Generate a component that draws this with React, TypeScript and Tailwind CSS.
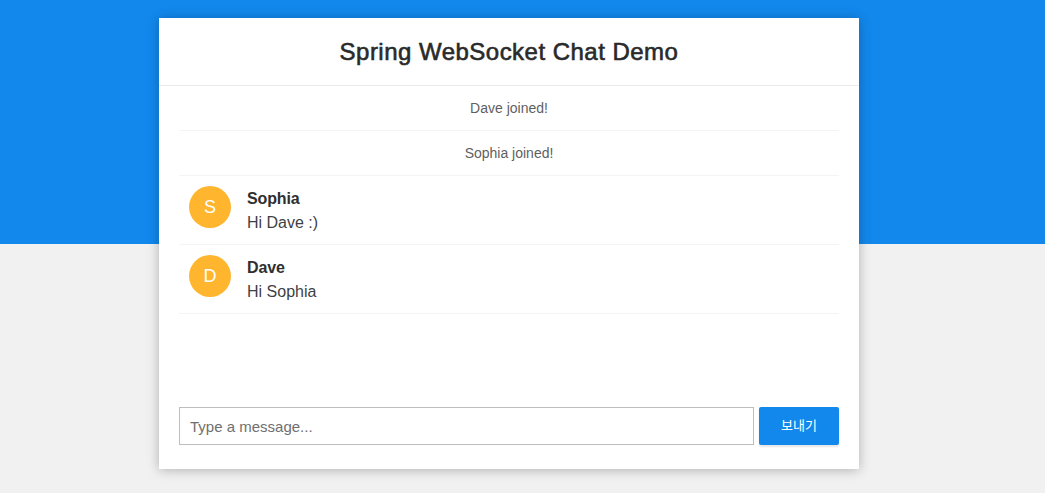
const messages = [
  { name: "Sophia", text: "Hi Dave :)" },
  { name: "Dave", text: "Hi Sophia" },
];

function EventRow({ children }: { children: React.ReactNode }) {
  return (
    <li className="h-[45px] border-b border-[#f4f4f4] pt-[13px] text-center text-[14px] leading-[18px] text-[#5f5f5f]">
      {children}
    </li>
  );
}

function ChatRow({ name, text }: { name: string; text: string }) {
  return (
    <li className="flex h-[69px] border-b border-[#f4f4f4] pl-[10px] pt-[10px]">
      <div className="flex h-[42px] w-[42px] items-center justify-center rounded-full bg-[#ffb52d] text-[18px] text-white">
        {name[0]}
      </div>
      <div className="ml-[16px] pt-[1px]">
        <div className="text-[16px] leading-[24px] font-bold tracking-[-0.15px] text-[#2f2f2f]">{name}</div>
        <p className="text-[16px] leading-[24px] text-[#3f3f44]">{text}</p>
      </div>
    </li>
  );
}

export default function App() {
  return (
    <div className="h-[493px] overflow-hidden bg-[linear-gradient(#1288ec_0,#1288ec_244px,#f1f1f1_244px)] pt-[18px] font-['Liberation_Sans',Arial,'Noto_Sans_CJK_KR',sans-serif]">
      <div className="ml-[159px] flex h-[451px] w-[700px] flex-col bg-white shadow-[0_1px_11px_rgba(0,0,0,0.27)]">
        <header className="h-[68px] border-b border-[#ececec] text-center">
          <h2 className="pt-[17px] text-[24px] leading-[34px] font-medium tracking-[0.48px] text-[#2a2a2a] [-webkit-text-stroke:0.6px_#2a2a2a]">
            Spring WebSocket Chat Demo
          </h2>
        </header>
        <ul className="flex-1 px-5">
          <EventRow>Dave joined!</EventRow>
          <EventRow>Sophia joined!</EventRow>
          {messages.map((m) => (
            <ChatRow key={m.name} name={m.name} text={m.text} />
          ))}
        </ul>
        <form className="flex gap-[5px] px-5 pb-6">
          <input
            placeholder="Type a message..."
            className="h-[38px] w-[575px] border border-[#bdbdbd] px-[10px] pt-[1px] text-[15px] text-[#333] outline-none placeholder:text-[#6f6f6f]"
          />
          <button
            type="button"
            className="h-[38px] w-[80px] rounded-[2px] bg-[#1288ec] text-[13px] text-white shadow-[0_2px_2px_rgba(0,0,0,0.1)]"
          >
            보내기
          </button>
        </form>
      </div>
    </div>
  );
}
